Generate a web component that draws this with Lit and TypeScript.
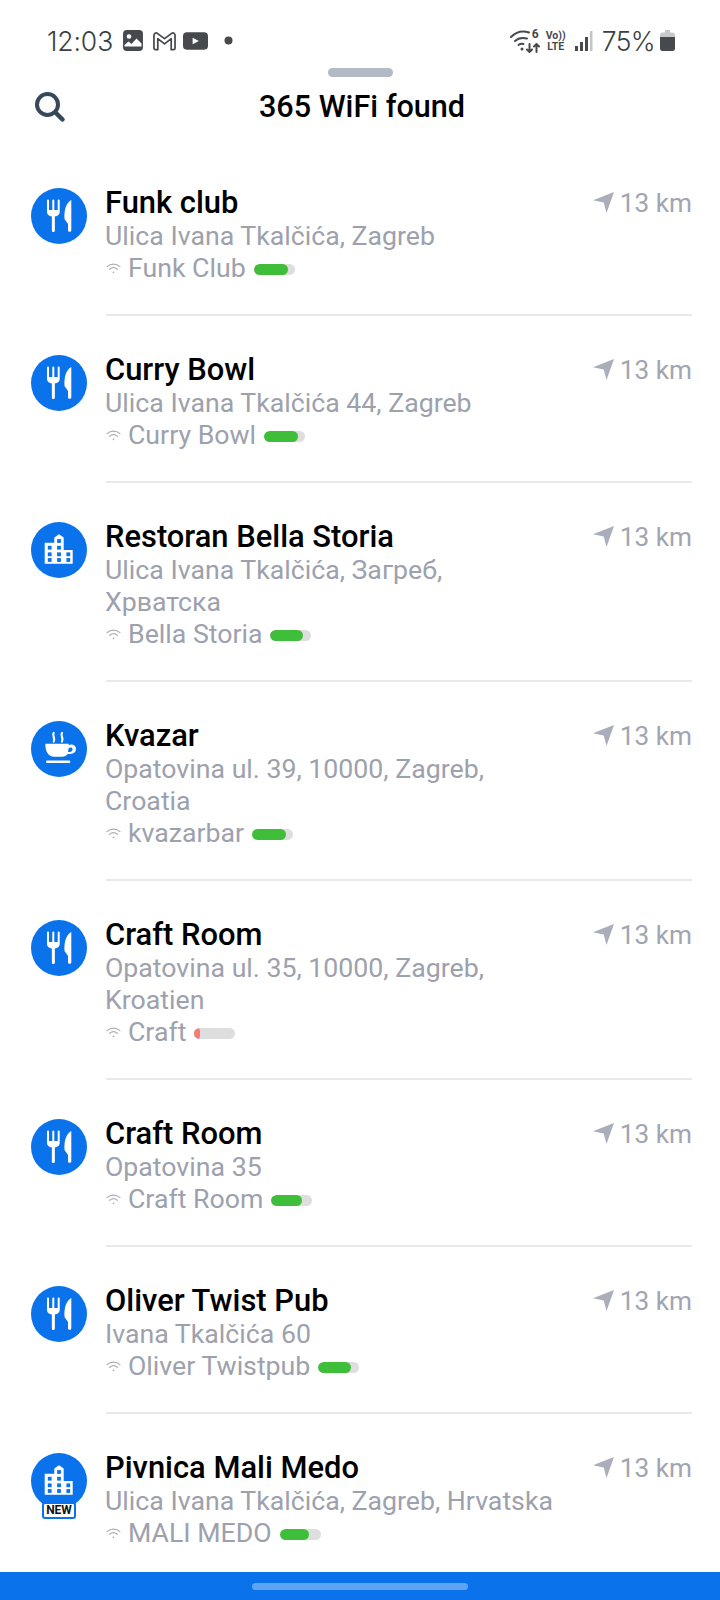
import { LitElement, html, css, svg } from 'lit';
import { customElement } from 'lit/decorators.js';

type Kind = 'food' | 'building' | 'cafe';

interface Place {
  name: string;
  address: string[];
  ssid: string;
  kind: Kind;
  signal: number;
  weak?: boolean;
  isNew?: boolean;
}

const places: Place[] = [
  { name: 'Funk club', address: ['Ulica Ivana Tkalčića, Zagreb'], ssid: 'Funk Club', kind: 'food', signal: 34 },
  { name: 'Curry Bowl', address: ['Ulica Ivana Tkalčića 44, Zagreb'], ssid: 'Curry Bowl', kind: 'food', signal: 34 },
  { name: 'Restoran Bella Storia', address: ['Ulica Ivana Tkalčića, Загреб,', 'Хрватска'], ssid: 'Bella Storia', kind: 'building', signal: 33 },
  { name: 'Kvazar', address: ['Opatovina ul. 39, 10000, Zagreb,', 'Croatia'], ssid: 'kvazarbar', kind: 'cafe', signal: 34 },
  { name: 'Craft Room', address: ['Opatovina ul. 35, 10000, Zagreb,', 'Kroatien'], ssid: 'Craft', kind: 'food', signal: 6, weak: true },
  { name: 'Craft Room', address: ['Opatovina 35'], ssid: 'Craft Room', kind: 'food', signal: 31 },
  { name: 'Oliver Twist Pub', address: ['Ivana Tkalčića 60'], ssid: 'Oliver Twistpub', kind: 'food', signal: 33 },
  { name: 'Pivnica Mali Medo', address: ['Ulica Ivana Tkalčića, Zagreb, Hrvatska'], ssid: 'MALI MEDO', kind: 'building', signal: 29, isNew: true },
];

const windows = [
  [28, 19],
  [18.7, 25.7],
  [28, 25.7],
  [18.7, 32.3],
  [28, 32.3],
  [37.3, 32.3],
  [18.7, 38],
  [28, 38],
  [37.3, 38],
];

const glyphs: Record<Kind, ReturnType<typeof svg>> = {
  food: svg`
    <path d="M16 12.500a1 1 0 0 1 2 0V22h3.300v-9.500a1 1 0 0 1 2 0V22h3.400v-9.500a1 1 0 0 1 2 0V24c0 2.500-1.900 4-4.850 4.600V42.500c0 2-3 2-3 0V28.600C17.900 28 16 26.500 16 24z" fill="#fff"/>
    <path d="M40.300 12v30.200c0 2-3.300 2-3.300 0V36l-3.500-5C33 22 35 15 40.300 12z" fill="#fff"/>`,
  building: svg`
    <path d="M13.700 20.700h9.600v-5.200L28 12.300l4.700 3.200V28h9v13.700h-28z" fill="#fff"/>
    <g fill="#0a73eb">
      ${windows.map(([x, y]) => svg`<rect x=${x - 1.9} y=${y - 1.9} width="3.800" height="3.800"/>`)}
    </g>`,
  cafe: svg`
    <path d="M14.300 22.700h23.400v1.500c3.100-1.600 7.300.1 7.300 3.800 0 3.900-4 5.400-8.300 5-1.500 1.800-3.200 2.700-5.200 2.700H23c-5.500 0-8.700-5-8.700-13zm23.300 4.500-.6 3.900c2.500.1 4.600-.8 4.600-2.900 0-1.800-2.500-2.400-4-1z" fill="#fff"/>
    <rect x="15" y="39.500" width="24.300" height="2.400" rx="1.200" fill="#fff"/>
    <path d="M22.700 12c-2.200 2.600 2.200 4.900 0 8.500M31 12c-2.200 2.600 2.200 4.900 0 8.500" fill="none" stroke="#fff" stroke-width="2.200" stroke-linecap="round"/>`,
};

@customElement('app-root')
export class AppRoot extends LitElement {
  static styles = css`
    :host {
      display: flex;
      flex-direction: column;
      width: 720px;
      height: 1600px;
      overflow: hidden;
      background: #fff;
      font-family: Roboto, 'Liberation Sans', sans-serif;
    }

    .status {
      height: 64px;
      flex: none;
      display: flex;
      align-items: center;
      padding: 17px 45px 0 47px;
      box-sizing: border-box;
      color: #474a4d;
    }
    .time {
      width: 76px;
      flex: none;
      font-family: Inter, Roboto, sans-serif;
      font-size: 26.500px;
      font-weight: 300;
      letter-spacing: -0.1px;
      color: #3c3f42;
    }
    .status svg {
      display: block;
      flex: none;
    }
    .spacer {
      flex: 1;
    }
    .net {
      position: relative;
      width: 30px;
      height: 24px;
      flex: none;
    }
    .six {
      position: absolute;
      right: 1px;
      top: -1px;
      font-size: 12px;
      font-weight: 700;
      line-height: 13px;
    }
    .volte {
      width: 20px;
      margin: 0 9px 0 6px;
      font-size: 10.500px;
      font-weight: 700;
      line-height: 11px;
      text-align: center;
      flex: none;
    }
    .pct {
      font-family: Inter, Roboto, sans-serif;
      font-size: 26.500px;
      font-weight: 300;
      letter-spacing: -0.6px;
      margin: 0 5px 0 9px;
      color: #3c3f42;
    }

    .header {
      flex: none;
      height: 85px;
      position: relative;
      display: flex;
      align-items: center;
      justify-content: center;
    }
    .grip {
      position: absolute;
      top: 4px;
      left: 328px;
      width: 65px;
      height: 9px;
      border-radius: 5px;
      background: #b4b9c6;
    }
    .search {
      position: absolute;
      left: 34px;
      top: 27px;
    }
    h1 {
      margin: 1px 0 0 4px;
      font-size: 30.600px;
      font-weight: 500;
      line-height: 34px;
      color: #000;
    }

    .list {
      flex: 1;
      overflow: hidden;
    }
    .row {
      display: flex;
      padding-left: 31px;
    }
    .badge {
      position: relative;
      width: 56px;
      height: 56px;
      margin-top: 39px;
      flex: none;
    }
    .badge svg {
      display: block;
    }
    .new {
      position: absolute;
      left: 11px;
      top: 49px;
      width: 34px;
      height: 17px;
      box-sizing: border-box;
      border: 2px solid #0a73eb;
      border-radius: 3px;
      background: #fff;
      color: #111;
      font-size: 12px;
      font-weight: 700;
      line-height: 13px;
      text-align: center;
    }
    .body {
      flex: 1;
      display: flex;
      margin: 0 28px 0 19px;
      padding: 36px 0 30px;
      border-bottom: 2px solid #e8e9ec;
      min-width: 0;
    }
    .row:last-child .body {
      border-bottom: 0;
    }
    .info {
      flex: 1;
      min-width: 0;
    }
    .name {
      font-size: 30.900px;
      font-weight: 500;
      line-height: 35px;
      margin-left: -1px;
      color: #000;
    }
    .line {
      font-size: 26.700px;
      line-height: 32px;
      margin-left: -1px;
      color: #9da1ad;
    }
    .ssid {
      display: flex;
      align-items: center;
      margin-left: 0;
    }
    .ssid svg {
      margin-right: 7px;
      flex: none;
    }
    .meter {
      width: 41px;
      height: 11px;
      margin: 2px 0 0 8px;
      border-radius: 6px;
      background: #dedede;
      overflow: hidden;
      flex: none;
    }
    .fill {
      height: 100%;
      border-radius: 6px;
      background: #3fbe3a;
    }
    .fill.weak {
      background: #f97b74;
    }
    .distance {
      display: flex;
      align-items: center;
      height: 35px;
      font-size: 26.200px;
      color: #a1a5b1;
      flex: none;
    }
    .distance svg {
      margin-right: 6px;
    }

    .bottom {
      flex: none;
      height: 28px;
      background: #0a73eb;
      display: flex;
      align-items: center;
      justify-content: center;
    }
    .pill {
      width: 216px;
      height: 7px;
      border-radius: 4px;
      background: #5ea4f2;
    }
  `;

  private renderPlace(p: Place) {
    return html`
      <div class="row">
        <div class="badge">
          <svg width="56" height="56" viewBox="0 0 56 56">
            <circle cx="28" cy="28" r="28" fill="#0a73eb"></circle>
            ${glyphs[p.kind]}
          </svg>
          ${p.isNew ? html`<div class="new">NEW</div>` : ''}
        </div>
        <div class="body">
          <div class="info">
            <div class="name">${p.name}</div>
            ${p.address.map((l) => html`<div class="line">${l}</div>`)}
            <div class="line ssid">
              <svg width="15" height="11" viewBox="0 0 15 11" fill="none" stroke="#a9adb7" stroke-width="1.200" stroke-linecap="round">
                <path d="M1 3.600c3.800-3.300 9.200-3.300 13 0"></path>
                <path d="M3.700 6.300c2.300-1.900 5.300-1.900 7.600 0"></path>
                <circle cx="7.500" cy="9.300" r=".9" fill="#a9adb7" stroke="none"></circle>
              </svg>
              ${p.ssid}
              <div class="meter">
                <div class="fill ${p.weak ? 'weak' : ''}" style="width:${p.signal}px"></div>
              </div>
            </div>
          </div>
          <div class="distance">
            <svg width="21" height="21" viewBox="0 0 21 21">
              <path d="M21 0 13.500 21l-2.800-10.500L0 8.200z" fill="#a9aeba"></path>
            </svg>
            13 km
          </div>
        </div>
      </div>
    `;
  }

  render() {
    return html`
      <div class="status">
        <span class="time">12:03</span>
        <svg width="20" height="21" viewBox="0 0 20 21">
          <rect x="0.800" y="0.800" width="18.400" height="19.400" rx="3" fill="#474a4d" stroke="#474a4d" stroke-width="1.500"></rect>
          <circle cx="6" cy="6.500" r="2.300" fill="#fff"></circle>
          <path d="M1.500 15l4-3.500 3 2.500 5-5.500 5 5v3H1.500z" fill="#fff"></path>
        </svg>
        <svg style="margin-left:10px" width="23" height="20" viewBox="0 0 24 20" fill="none" stroke="#474a4d" stroke-width="1.800" stroke-linejoin="round">
          <path d="M1 4c0-2 2-3 3.500-2L12 7.500 19.500 2C21 1 23 2 23 4v13.500c0 .8-.6 1.500-1.500 1.500H19V7.500l-7 5.500-7-5.500V19H2.500c-.9 0-1.500-.7-1.500-1.500z"></path>
        </svg>
        <svg style="margin-left:7px" width="25" height="18" viewBox="0 0 26 18">
          <rect width="26" height="18" rx="4" fill="#474a4d"></rect>
          <path d="M10 5.500v7l6.500-3.500z" fill="#fff"></path>
        </svg>
        <svg style="margin-left:16px" width="9" height="9" viewBox="0 0 9 9">
          <circle cx="4.500" cy="4.500" r="4" fill="#474a4d"></circle>
        </svg>
        <div class="spacer"></div>
        <div class="net">
          <svg width="30" height="24" viewBox="0 0 30 24" fill="none" stroke="#474a4d" stroke-width="2" stroke-linecap="round" stroke-linejoin="round">
            <path d="M1 8c5-5 12-6.500 18-4.500"></path>
            <path d="M5 12c3-3 8-3.500 12-2.500"></path>
            <path d="M8.500 16c1.500-1.200 3-1.500 5-1"></path>
            <circle cx="12" cy="20" r="1.500" fill="#474a4d" stroke="none"></circle>
            <path d="M19.500 15v8M17 20.500l2.500 2.500 2.500-2.500"></path>
            <path d="M26.500 23v-8M24 17.500l2.500-2.500 2.500 2.500"></path>
          </svg>
          <span class="six">6</span>
        </div>
        <div class="volte">Vo))<br />LTE</div>
        <svg width="18" height="20" viewBox="0 0 18 20">
          <rect x="0" y="15" width="3" height="5" fill="#474a4d"></rect>
          <rect x="5" y="11" width="3" height="9" fill="#474a4d"></rect>
          <rect x="10" y="6" width="3" height="14" fill="#474a4d"></rect>
          <rect x="15" y="0" width="2.500" height="20" fill="#c4c5c7"></rect>
        </svg>
        <span class="pct">75%</span>
        <svg width="15" height="21" viewBox="0 0 15 21">
          <path d="M5 0h5v2.500h2.500c1.400 0 2.500 1.100 2.500 2.500v13.500c0 1.400-1.100 2.500-2.500 2.500h-10C1.100 21 0 19.900 0 18.500V5c0-1.400 1.100-2.500 2.500-2.500H5z" fill="#c8c9cb"></path>
          <path d="M0 7h15v11.500c0 1.400-1.100 2.500-2.500 2.500h-10C1.100 21 0 19.900 0 18.500z" fill="#474a4d"></path>
        </svg>
      </div>
      <div class="header">
        <div class="grip"></div>
        <svg class="search" width="32" height="32" viewBox="0 0 32 32" fill="none" stroke="#36495a" stroke-linecap="round">
          <circle cx="13.500" cy="13.500" r="10.500" stroke-width="4"></circle>
          <path d="M21.500 21.500l7 7" stroke-width="4.500"></path>
        </svg>
        <h1>365 WiFi found</h1>
      </div>
      <div class="list">${places.map((p) => this.renderPlace(p))}</div>
      <div class="bottom"><div class="pill"></div></div>
    `;
  }
}

declare global {
  interface HTMLElementTagNameMap {
    'app-root': AppRoot;
  }
}
